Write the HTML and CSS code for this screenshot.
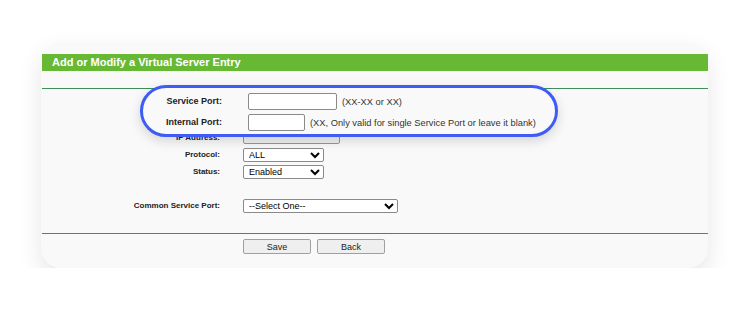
FILE: index.html
```html
<!DOCTYPE html>
<html>
<head>
  <title>Virtual Server Entry</title>
  <link rel="stylesheet" href="styles.css">
</head>
<body>
  <div class="card">
    <div class="panel-title">Add or Modify a Virtual Server Entry</div>
    <div class="rule"></div>

    <div class="form">
      <!-- first two rows sit under the callout -->
      <div class="spacer"></div>
      <div class="spacer"></div>
      <div class="spacer"></div>
      <div class="spacer"></div>
      <label class="form-label">IP Address:</label>
      <div class="form-control"><input type="text" class="field field-ip"></div>
      <label class="form-label">Protocol:</label>
      <div class="form-control">
        <select class="picker picker-small">
          <option>ALL</option>
          <option>TCP</option>
          <option>UDP</option>
        </select>
      </div>
      <label class="form-label">Status:</label>
      <div class="form-control">
        <select class="picker picker-small">
          <option>Enabled</option>
          <option>Disabled</option>
        </select>
      </div>
      <div class="spacer"></div>
      <div class="spacer"></div>
      <label class="form-label">Common Service Port:</label>
      <div class="form-control">
        <select class="picker picker-large">
          <option>--Select One--</option>
        </select>
      </div>
    </div>

    <div class="rule rule-bottom"></div>
    <div class="actions">
      <button class="btn">Save</button>
      <button class="btn">Back</button>
    </div>

    <div class="highlight">
      <span class="hl-label">Service Port:</span>
      <div class="hl-field">
        <input type="text" class="hl-input hl-input-wide">
        <span class="hint">(XX-XX or XX)</span>
      </div>
      <span class="hl-label">Internal Port:</span>
      <div class="hl-field">
        <input type="text" class="hl-input hl-input-short">
        <span class="hint">(XX, Only valid for single Service Port or leave it blank)</span>
      </div>
    </div>
  </div>
</body>
</html>
```

FILE: styles.css
```css
body {
  margin: 0;
  background: #fff;
  font-family: "Liberation Sans", Arial, sans-serif;
  color: #333;
}

.card {
  position: relative;
  width: 667px;
  height: 226px;
  box-sizing: border-box;
  margin: 42px 0 0 41px;
  padding: 12px 0 0 1px;
  background: #f9f9f9;
  border-radius: 20px;
  box-shadow: 0 10px 24px rgba(0, 0, 0, 0.1);
}

.panel-title {
  height: 17px;
  line-height: 17px;
  padding-left: 10px;
  background: #67b934;
  color: #fff;
  font-size: 11px;
  font-weight: bold;
}

.rule {
  height: 1px;
  margin-top: 17px;
  background: #3f8f5c;
}

.rule-bottom {
  margin-top: 20px;
}

.form {
  display: grid;
  grid-template-columns: 178px 1fr;
  grid-auto-rows: 14px;
  column-gap: 23px;
  row-gap: 3px;
  padding-top: 8px;
}

.form-label {
  text-align: right;
  font-size: 8px;
  font-weight: bold;
  line-height: 14px;
  color: #222;
}

.form-control {
  display: flex;
  align-items: center;
}

.field {
  box-sizing: border-box;
  height: 13px;
  border: 1px solid #999;
  border-radius: 2px;
  background: #fff;
  padding: 0 2px;
}

.field-ip {
  width: 97px;
  height: 12px;
  background: #f0f0f0;
}

.picker {
  display: block;
  box-sizing: border-box;
  height: 14px;
  padding: 0 0 0 1px;
  border: 1px solid #8a8a8a;
  border-radius: 2px;
  background: #fff;
  color: #000;
  font-family: "Liberation Sans", Arial, sans-serif;
  font-size: 9px;
}

.picker-small {
  width: 81px;
}

.picker-large {
  width: 155px;
}

.actions {
  display: flex;
  gap: 6px;
  padding: 5px 0 0 201px;
}

.btn {
  box-sizing: border-box;
  width: 68px;
  height: 15px;
  padding: 0;
  border: 1px solid #a0a0a0;
  border-radius: 2px;
  background: #efefef;
  color: #222;
  font-family: "Liberation Sans", Arial, sans-serif;
  font-size: 9px;
}

/* callout over the first two rows */
.highlight {
  position: absolute;
  left: 99px;
  top: 43px;
  width: 418px;
  height: 52px;
  box-sizing: border-box;
  padding-top: 5px;
  border: 3px solid #3d5cf5;
  border-radius: 26px;
  background: #f9f9f9;
  box-shadow: 0 4px 12px rgba(0, 0, 0, 0.15);
  display: grid;
  grid-template-columns: 79px 1fr;
  grid-auto-rows: 17px;
  column-gap: 26px;
  row-gap: 4px;
}

.hl-label {
  text-align: right;
  font-size: 9px;
  font-weight: bold;
  line-height: 17px;
  color: #222;
}

.hl-field {
  display: flex;
  align-items: center;
  gap: 5px;
}

.hl-input {
  box-sizing: border-box;
  height: 17px;
  border: 1px solid #8a8a8a;
  border-radius: 2px;
  background: #fff;
}

.hl-input-wide {
  width: 89px;
}

.hl-input-short {
  width: 57px;
}

.hint {
  font-size: 9.3px;
  white-space: nowrap;
}
```
